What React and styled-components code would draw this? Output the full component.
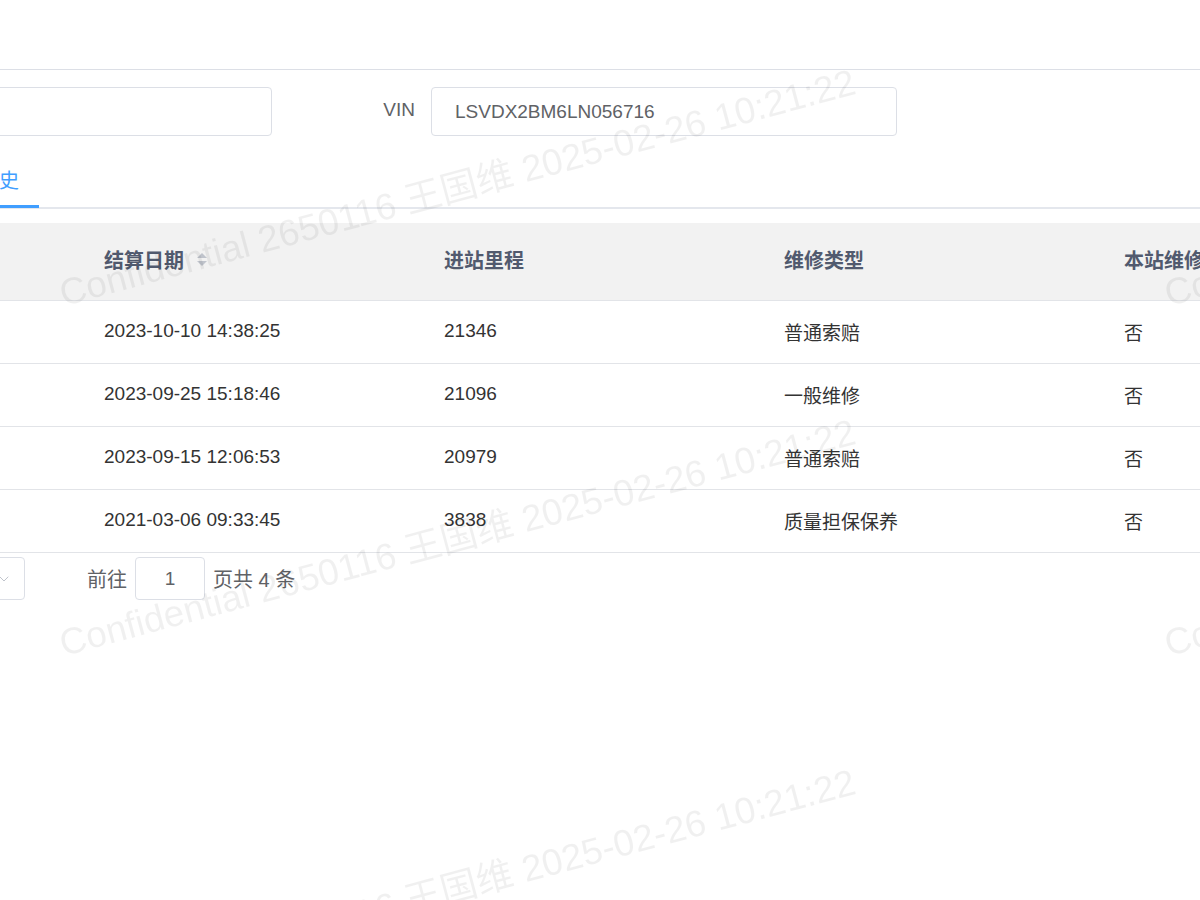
import React from "react";
import styled, { createGlobalStyle } from "styled-components";
import { ChevronDown } from "lucide-react";

// # DATA
const rows = [
	{ no: 1, date: "2023-10-10 14:38:25", mileage: "21346", type: "普通索赔", local: "否" },
	{ no: 2, date: "2023-09-25 15:18:46", mileage: "21096", type: "一般维修", local: "否" },
	{ no: 3, date: "2023-09-15 12:06:53", mileage: "20979", type: "普通索赔", local: "否" },
	{ no: 4, date: "2021-03-06 09:33:45", mileage: "3838", type: "质量担保保养", local: "否" },
];

const marks = [
	{ x: 65, y: 312 },
	{ x: 65, y: 662 },
	{ x: 65, y: 1012 },
	{ x: 1170, y: 312 },
	{ x: 1170, y: 662 },
];

const WATERMARK = "Confidential 2650116 王国维 2025-02-26 10:21:22";

// # MAIN COMP..
const App = () => {
	return (
		<>
			<GlobalStyle />
			<Page>
				<Panel>
					<FormRow>
						<TextInput $width={372} defaultValue="" />
						<Label>VIN</Label>
						<TextInput $width={466} defaultValue="LSVDX2BM6LN056716" />
					</FormRow>

					<TabBar>
						<TabItem>维修历史</TabItem>
					</TabBar>

					<Table>
						<HeadCell>序号</HeadCell>
						<HeadCell>
							结算日期
							<SortIcon>
								<i className="up" />
								<i className="down" />
							</SortIcon>
						</HeadCell>
						<HeadCell>进站里程</HeadCell>
						<HeadCell>维修类型</HeadCell>
						<HeadCell>本站维修</HeadCell>
						{rows.map(r => (
							<React.Fragment key={r.no}>
								<Cell>{r.no}</Cell>
								<Cell>{r.date}</Cell>
								<Cell>{r.mileage}</Cell>
								<Cell>{r.type}</Cell>
								<Cell>{r.local}</Cell>
							</React.Fragment>
						))}
					</Table>

					<Pager>
						<SizeSelect>
							<span>10条/页</span>
							<ChevronDown size={16} strokeWidth={1.5} />
						</SizeSelect>
						<PagerText>前往</PagerText>
						<JumpInput defaultValue="1" />
						<PagerText>页共 4 条</PagerText>
					</Pager>
				</Panel>
			</Page>

			<Watermarks>
				{marks.map((m, i) => (
					<Mark key={i} style={{ left: m.x, top: m.y - 37 }}>
						{WATERMARK}
					</Mark>
				))}
			</Watermarks>
		</>
	);
};

// # STYLED COMPONENTS
const GlobalStyle = createGlobalStyle`
	html, body {
		margin: 0;
		padding: 0;
		background: #fff;
		overflow: hidden;
	}
	body {
		font-family: "Liberation Sans", "Noto Sans CJK SC", Arial, sans-serif;
		color: #333;
	}
	* {
		box-sizing: border-box;
	}
`;

const Page = styled.div`
	width: 1200px;
	height: 900px;
	overflow: hidden;
	padding-top: 69px;
`;

const Panel = styled.section`
	width: 1600px;
	margin-left: -100px;
	border-top: 1px solid #dcdfe6;
`;

const FormRow = styled.div`
	display: flex;
	align-items: center;
	padding-top: 17px;
`;

const TextInput = styled.input`
	width: ${p => p.$width}px;
	height: 49px;
	border: 1px solid #dcdfe6;
	border-radius: 4px;
	padding: 0 23px;
	font-family: inherit;
	font-size: 19px;
	color: #606266;
	outline: none;
	background: #fff;
`;

const Label = styled.label`
	width: 159px;
	text-align: right;
	padding-right: 16px;
	font-size: 19px;
	color: #606266;
	margin-top: -4px;
`;

const TabBar = styled.div`
	display: flex;
	margin-top: 19px;
	border-bottom: 2px solid #e4e7ed;
`;

const TabItem = styled.div`
	height: 53px;
	line-height: 53px;
	padding: 0 20px 0 39px;
	font-size: 20px;
	color: #409eff;
	box-shadow: inset 0 -3px 0 #409eff;
	margin-bottom: -1px;
`;

const Table = styled.div`
	display: grid;
	grid-template-columns: 180px 340px 340px 340px 340px;
	margin-top: 14px;
`;

const HeadCell = styled.div`
	display: flex;
	align-items: center;
	height: 78px;
	padding: 0 0 4px 24px;
	background: #f2f2f2;
	border-bottom: 1px solid #e2e4e8;
	font-size: 20px;
	font-weight: 600;
	color: #515a6e;
	white-space: nowrap;
`;

const SortIcon = styled.span`
	display: inline-flex;
	flex-direction: column;
	gap: 3px;
	margin-left: 13px;

	i {
		width: 0;
		height: 0;
		border-left: 5px solid transparent;
		border-right: 5px solid transparent;
	}
	.up {
		border-bottom: 5px solid #c0c4cc;
	}
	.down {
		border-top: 5px solid #c0c4cc;
	}
`;

const Cell = styled.div`
	display: flex;
	align-items: center;
	height: 63px;
	padding: 0 0 2px 24px;
	border-bottom: 1px solid #e2e4e8;
	font-size: 19px;
	color: #333;
	white-space: nowrap;
`;

const Pager = styled.div`
	display: flex;
	align-items: center;
	margin-top: 4px;
	height: 43px;
`;

const SizeSelect = styled.div`
	display: flex;
	align-items: center;
	justify-content: space-between;
	width: 125px;
	height: 43px;
	padding: 0 12px;
	border: 1px solid #dcdfe6;
	border-radius: 4px;
	font-size: 18px;
	color: #606266;
	margin-right: 62px;

	svg {
		color: #c0c4cc;
	}
`;

const PagerText = styled.span`
	font-size: 20px;
	color: #606266;
	white-space: nowrap;
`;

const JumpInput = styled.input`
	width: 70px;
	height: 43px;
	margin: 0 8px;
	border: 1px solid #dcdfe6;
	border-radius: 4px;
	text-align: center;
	font-family: inherit;
	font-size: 19px;
	color: #606266;
	outline: none;
`;

const Watermarks = styled.div`
	position: fixed;
	inset: 0;
	pointer-events: none;
	overflow: hidden;
`;

const Mark = styled.span`
	position: absolute;
	line-height: 37px;
	font-size: 37px;
	white-space: nowrap;
	color: rgba(0, 0, 0, 0.06);
	transform: rotate(-15deg);
	transform-origin: 0 100%;
`;

export default App;
